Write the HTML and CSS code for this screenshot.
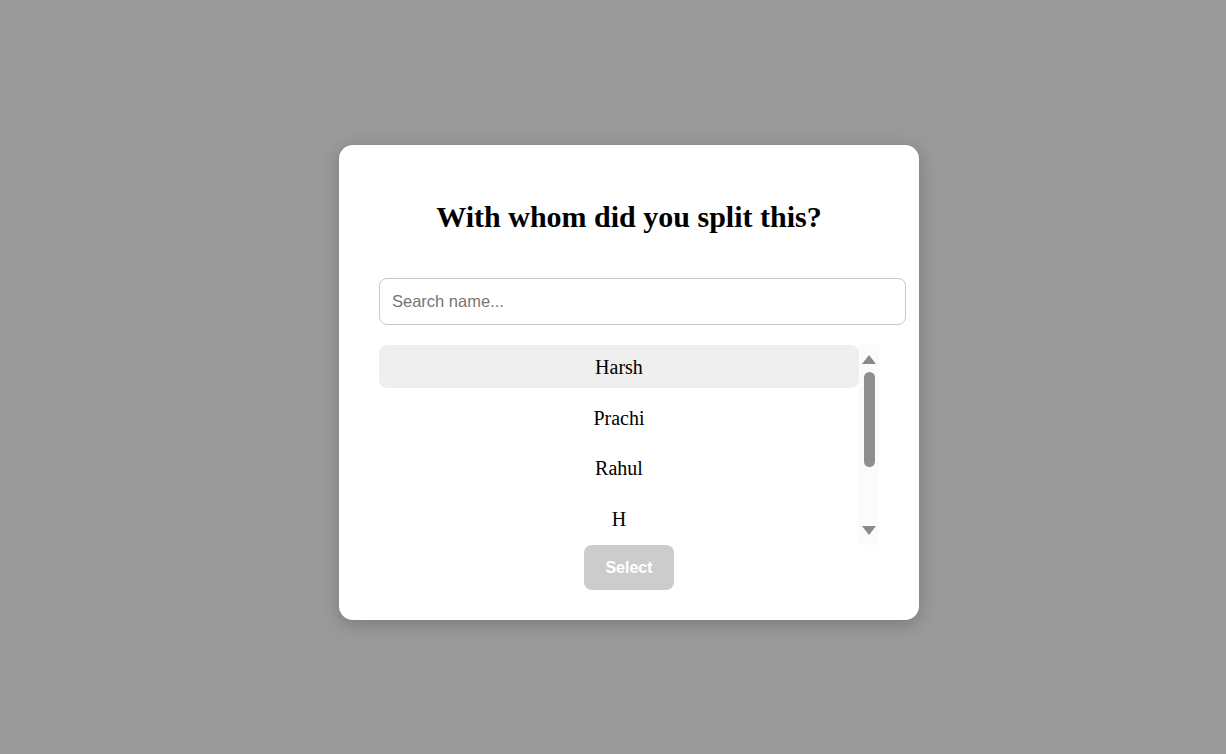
FILE: index.html
```html
<!DOCTYPE html>
<html lang="en">
<head>
<meta charset="utf-8">
<title>Split with</title>
<link rel="stylesheet" href="styles.css">
</head>
<body>
<div class="overlay">
  <div class="modal">
    <h2 class="title">With whom did you split this?</h2>
    <input class="search" type="text" placeholder="Search name...">
    <div class="list-wrap">
      <ul class="list">
        <li class="item active">Harsh</li>
        <li class="item">Prachi</li>
        <li class="item">Rahul</li>
        <li class="item">H</li>
      </ul>
      <div class="scrollbar">
        <span class="arrow-up"></span>
        <span class="thumb"></span>
        <span class="spacer"></span>
        <span class="arrow-down"></span>
      </div>
    </div>
    <div class="actions">
      <button class="select-btn" type="button">Select</button>
    </div>
  </div>
</div>
</body>
</html>
```
FILE: styles.css
```css
html, body {
  margin: 0;
  padding: 0;
}

body {
  background: #9a9a9a;
  font-family: "Liberation Serif", "Times New Roman", serif;
}

.overlay {
  box-sizing: border-box;
  height: 100vh;
  display: flex;
  justify-content: center;
  align-items: center;
  padding-left: 32px;
  padding-top: 11px;
}

.modal {
  width: 500px;
  padding: 30px 40px 30px;
  background: #fff;
  border-radius: 14px;
  box-shadow: 0 4px 18px rgba(0, 0, 0, 0.22);
}

.title {
  margin: 25px 0 44px;
  font-size: 30px;
  font-weight: bold;
  text-align: center;
  color: #000;
}

.search {
  display: block;
  width: 100%;
  height: 21px;
  padding: 12px 13px 12px 12px;
  margin: 0 0 20px;
  border: 1px solid #c8c8c8;
  border-radius: 8px;
  font-family: "Liberation Sans", Arial, sans-serif;
  font-size: 16.5px;
  line-height: 21px;
  color: #222;
  outline: none;
}

.search::placeholder {
  color: #757575;
}

.list-wrap {
  display: flex;
  height: 200px;
}

.list {
  flex: 1;
  margin: 0;
  padding: 0;
  list-style: none;
  overflow: hidden;
}

.item {
  padding: 11px 0 9px;
  margin-bottom: 7.6px;
  font-size: 20px;
  line-height: 23px;
  text-align: center;
  color: #000;
  border-radius: 8px;
}

.item.active {
  background: #efefef;
}

.scrollbar {
  width: 20px;
  background: #fbfbfb;
  display: flex;
  flex-direction: column;
  align-items: center;
  padding: 10px 0 10px;
  box-sizing: border-box;
}

.arrow-up {
  width: 0;
  height: 0;
  border-left: 7px solid transparent;
  border-right: 7px solid transparent;
  border-bottom: 9px solid #8a8a8a;
}

.thumb {
  width: 11px;
  height: 95px;
  margin-top: 8px;
  border-radius: 6px;
  background: #8f8f8f;
}

.spacer {
  flex: 1;
}

.arrow-down {
  width: 0;
  height: 0;
  border-left: 7px solid transparent;
  border-right: 7px solid transparent;
  border-top: 9px solid #8a8a8a;
}

.actions {
  display: flex;
  justify-content: center;
}

.select-btn {
  padding: 13px 21px;
  border: none;
  border-radius: 8px;
  background: #cccccc;
  color: #fff;
  font-family: "Liberation Sans", Arial, sans-serif;
  font-size: 16px;
  font-weight: bold;
  line-height: 19px;
  cursor: not-allowed;
}
```
